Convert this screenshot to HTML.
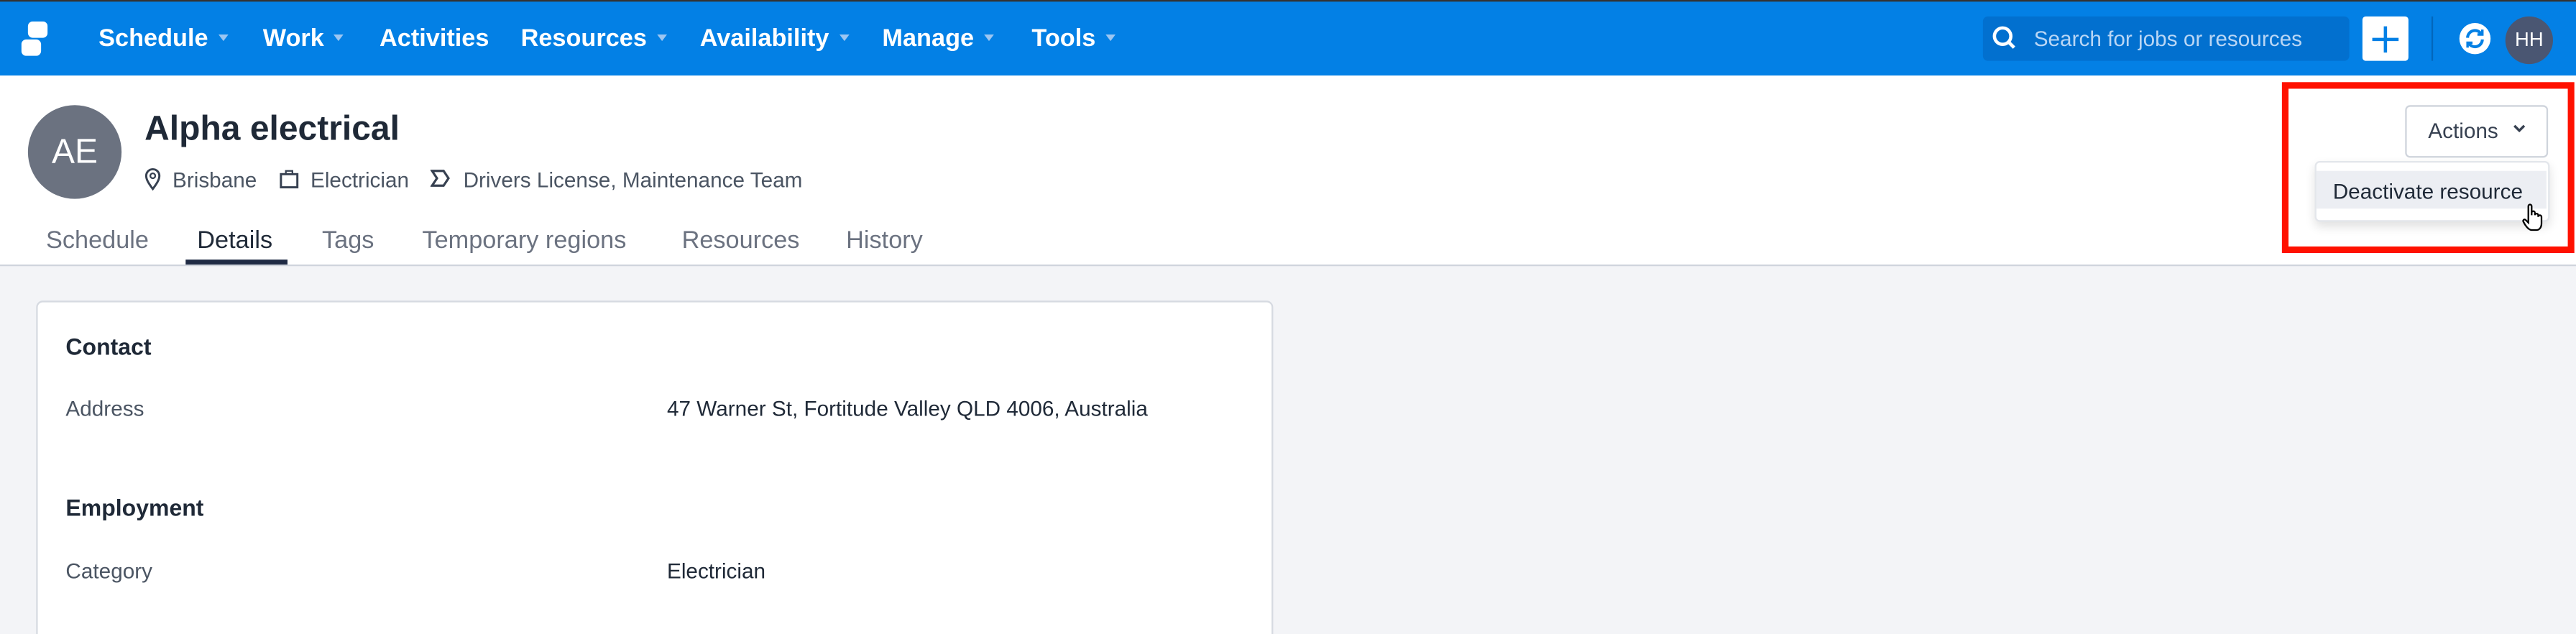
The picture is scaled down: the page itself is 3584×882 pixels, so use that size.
<!DOCTYPE html>
<html><head><meta charset="utf-8"><style>
html,body{margin:0;padding:0;width:3584px;height:882px;overflow:hidden;background:#f3f4f7}
#w{position:absolute;left:0;top:0;width:1568px;height:386px;transform:scale(2.285714);transform-origin:0 0;font-family:"Liberation Sans",sans-serif;background:#f3f4f7;overflow:hidden}
.a{position:absolute;white-space:nowrap}
.nav{left:0;top:0;width:1568px;height:46px;background:#0380e5;border-top:1px solid #333;box-sizing:border-box}
.ni{color:#fff;font-size:15px;font-weight:bold;top:15px}
.car{display:inline-block;width:0;height:0;border-left:3.5px solid transparent;border-right:3.5px solid transparent;border-top:4px solid #9cc6f2;margin-left:6px;vertical-align:3px}
.hdr{left:0;top:46px;width:1568px;height:115px;background:#fff;border-bottom:1px solid #cfd4dc}
.meta{font-size:13px;color:#4b5563;top:102px}
.tab{font-size:15px;color:#6b7280;top:138px}
.card{left:22px;top:183px;width:751px;height:260px;background:#fff;border:1px solid #d6dae1;border-radius:4px}
.h{font-size:14px;font-weight:bold;color:#1f2937}
.l{font-size:13px;color:#4b5563}
.v{font-size:13px;color:#1f2937}
</style></head><body><div id="w">
<div class="a nav"></div>
<svg class="a" style="left:13px;top:13px" width="16" height="21" viewBox="0 0 16 21"><rect x="4" y="0" width="12" height="10" rx="3" fill="#fff"/><rect x="0" y="11" width="12" height="10" rx="3" fill="#fff"/></svg>
<div class="a ni" style="left:60px">Schedule<span class="car"></span></div>
<div class="a ni" style="left:160px">Work<span class="car"></span></div>
<div class="a ni" style="left:231px">Activities</div>
<div class="a ni" style="left:317px">Resources<span class="car"></span></div>
<div class="a ni" style="left:426px">Availability<span class="car"></span></div>
<div class="a ni" style="left:537px">Manage<span class="car"></span></div>
<div class="a ni" style="left:628px">Tools<span class="car"></span></div>
<div class="a" style="left:1207px;top:10px;width:223px;height:27px;background:#0270cf;border-radius:3px"></div>
<svg class="a" style="left:1212px;top:15px" width="16" height="16" viewBox="0 0 16 16"><circle cx="7" cy="7" r="5" fill="none" stroke="#fff" stroke-width="2"/><path d="M10.5 10.5L14 14" stroke="#fff" stroke-width="2"/></svg>
<div class="a" style="left:1238px;top:16px;font-size:13px;color:#b9d6f5">Search for jobs or resources</div>
<div class="a" style="left:1438px;top:10px;width:28px;height:27px;background:#fff;border-radius:2px"></div>
<svg class="a" style="left:1442px;top:14px" width="20" height="20"><path d="M10 2V18M2 10H18" stroke="#0380e5" stroke-width="2"/></svg>
<div class="a" style="left:1480px;top:10px;width:1px;height:27px;background:#0266bb"></div>
<div class="a" style="left:1497px;top:14px;width:19px;height:19px;border-radius:50%;background:#fff"></div>
<svg class="a" style="left:1500px;top:17px" width="13" height="13" viewBox="0 0 13 13"><path d="M2 6A4.5 4.5 0 0 1 10.5 4M11 7A4.5 4.5 0 0 1 2.5 9" stroke="#0380e5" stroke-width="1.8" fill="none"/><path d="M8 4H11V1M5 9H2V12" stroke="#0380e5" stroke-width="1.5" fill="none"/></svg>
<div class="a" style="left:1525px;top:10px;width:29px;height:29px;border-radius:50%;background:#4a5672;color:#fff;font-size:12px;text-align:center;line-height:29px">HH</div>
<div class="a hdr"></div>
<div class="a" style="left:17px;top:64px;width:57px;height:57px;border-radius:50%;background:#6b7280;color:#fff;font-size:21px;text-align:center;line-height:57px">AE</div>
<div class="a" style="left:88px;top:67px;font-size:21px;font-weight:bold;color:#1f2937">Alpha electrical</div>
<svg class="a" style="left:88px;top:102px" width="10" height="14" viewBox="0 0 10 14"><path d="M5 13C2 9 1 7 1 5A4 4 0 0 1 9 5C9 7 8 9 5 13Z" fill="none" stroke="#374151" stroke-width="1.3"/><circle cx="5" cy="5" r="1.5" fill="none" stroke="#374151"/></svg>
<div class="a meta" style="left:105px">Brisbane</div>
<svg class="a" style="left:170px;top:103px" width="12" height="12" viewBox="0 0 12 12"><rect x="1" y="3" width="10" height="8" fill="none" stroke="#374151" stroke-width="1.3"/><path d="M4 3V1H8V3" fill="none" stroke="#374151"/></svg>
<div class="a meta" style="left:189px">Electrician</div>
<svg class="a" style="left:262px;top:103px" width="12" height="11" viewBox="0 0 12 11"><path d="M1 1H8L11 5.5L8 10H1L4 5.5Z" fill="none" stroke="#374151" stroke-width="1.4"/></svg>
<div class="a meta" style="left:282px">Drivers License, Maintenance Team</div>
<div class="a tab" style="left:28px">Schedule</div>
<div class="a tab" style="left:120px;color:#1f2937">Details</div>
<div class="a" style="left:113px;top:158px;width:62px;height:3px;background:#1f2a44"></div>
<div class="a tab" style="left:196px">Tags</div>
<div class="a tab" style="left:257px">Temporary regions</div>
<div class="a tab" style="left:415px">Resources</div>
<div class="a tab" style="left:515px">History</div>
<div class="a card"></div>
<div class="a h" style="left:40px;top:203px">Contact</div>
<div class="a l" style="left:40px;top:241px">Address</div>
<div class="a v" style="left:406px;top:241px">47 Warner St, Fortitude Valley QLD 4006, Australia</div>
<div class="a h" style="left:40px;top:301px">Employment</div>
<div class="a l" style="left:40px;top:340px">Category</div>
<div class="a v" style="left:406px;top:340px">Electrician</div>
<div class="a" style="left:1389px;top:50px;width:170px;height:96px;border:4px solid #ff1100"></div>
<div class="a" style="left:1464px;top:64px;width:85px;height:30px;border:1px solid #cfd4dc;border-radius:3px;background:#fff"></div>
<div class="a" style="left:1478px;top:72px;font-size:13px;color:#374151">Actions</div>
<svg class="a" style="left:1529px;top:75px" width="9" height="7"><path d="M1.5 1.5L4.5 4.5L7.5 1.5" stroke="#374151" stroke-width="1.5" fill="none"/></svg>
<div class="a" style="left:1409px;top:98px;width:141px;height:35px;background:#fff;border:1px solid #e3e6eb;border-radius:3px;box-shadow:0 3px 6px rgba(0,0,0,.12)"></div>
<div class="a" style="left:1410px;top:104px;width:140px;height:23px;background:#eceef3"></div>
<div class="a" style="left:1420px;top:109px;font-size:13px;color:#1f2937">Deactivate resource</div>
<svg class="a" style="left:1535px;top:123px" width="14" height="18" viewBox="0 0 14 18"><path d="M4 9V2.5A1 1 0 0 1 6 2.5V8V6.5A1 1 0 0 1 8 6.5V8A1 1 0 0 1 10 8V9A1 1 0 0 1 12 9V13C12 15 11 17 9 17H6C4 17 2 14 1 12C0.5 11 1.5 10 2.5 11L4 12.5Z" fill="#fff" stroke="#000" stroke-width="1"/></svg>
</div></body></html>
